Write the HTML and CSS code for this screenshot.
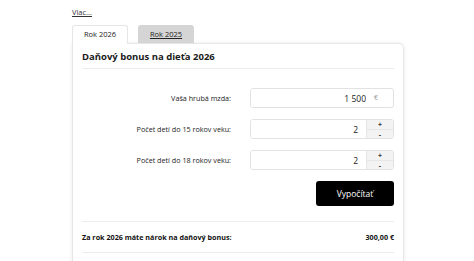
FILE: index.html
```html
<!DOCTYPE html>
<html lang="sk">
<head>
  <meta charset="UTF-8" />
  <title>Daňový bonus na dieťa</title>
  <link rel="stylesheet" href="styles.css">
</head>
<body>
  <div class="wrap">
    <a class="more" href="#">Viac...</a>

    <!-- záložky rokov -->
    <div class="tabs">
      <div class="tab active">Rok 2026</div>
      <a class="tab" href="#">Rok 2025</a>
    </div>

    <!-- kalkulačka -->
    <div class="card">
      <h2>Daňový bonus na dieťa 2026</h2>

      <div class="form">
        <div class="row">
          <label for="mzda">Vaša hrubá mzda:</label>
          <div class="field">
            <input type="text" id="mzda" value="1 500" />
            <span class="unit">€</span>
          </div>
        </div>
        <div class="row">
          <label for="deti15">Počet detí do 15 rokov veku:</label>
          <div class="field">
            <input type="text" id="deti15" value="2" />
            <div class="stepper"><span>+</span><span>-</span></div>
          </div>
        </div>
        <div class="row">
          <label for="deti18">Počet detí do 18 rokov veku:</label>
          <div class="field">
            <input type="text" id="deti18" value="2" />
            <div class="stepper"><span>+</span><span>-</span></div>
          </div>
        </div>
        <div class="actions">
          <button class="calc">Vypočítať</button>
        </div>
      </div>

      <div class="result">
        <span>Za rok 2026 máte nárok na daňový bonus:</span>
        <span>300,00 €</span>
      </div>
    </div>
  </div>
</body>
</html>
```

FILE: styles.css
```css
body {
  margin: 0;
  background-color: #fff;
  font-family: 'Open Sans', 'Noto Sans', sans-serif;
  color: #222;
  overflow: hidden;
}

.wrap {
  width: 332px;
  margin-left: 72px;
  padding-top: 6px;
}

.more {
  display: block;
  width: max-content;
  font-size: 7.5px;
  color: #333;
  line-height: 12px;
}

/* záložky */
.tabs {
  display: flex;
  gap: 10px;
  margin-top: 7px;
}

.tab {
  width: 56px;
  height: 18px;
  line-height: 18px;
  text-align: center;
  font-size: 7.5px;
  font-weight: 500;
  color: #222;
  border-radius: 3px 3px 0 0;
  background-color: #d5d5d5;
  box-sizing: border-box;
}

.tab.active {
  background-color: #fff;
  border: 1px solid #e6e6e6;
  border-bottom: none;
  line-height: 17px;
  position: relative;
  z-index: 2;
  margin-bottom: -1px;
  height: 19px;
}

/* karta */
.card {
  border: 1px solid #e6e6e6;
  border-radius: 0 5px 5px 5px;
  box-shadow: 0 0 4px rgba(0,0,0,0.08);
  padding: 0 9px;
  height: 240px;
  box-sizing: border-box;
}

.card h2 {
  margin: 0;
  padding-top: 4px;
  height: 20px;
  line-height: 17px;
  font-size: 9.5px;
  font-weight: 700;
  color: #1a1a1a;
  border-bottom: 1px solid #ececec;
}

.form {
  padding-top: 19px;
}

.row {
  display: flex;
  align-items: center;
  margin-bottom: 11px;
}

.row label {
  width: 149px;
  margin-right: 19px;
  text-align: right;
  font-size: 7.2px;
  font-weight: 500;
  color: #222;
}

.field {
  width: 144px;
  height: 20px;
  display: flex;
  border: 1px solid #e2e2e2;
  border-radius: 3px;
  box-sizing: border-box;
  overflow: hidden;
}

.field input {
  flex: 1;
  min-width: 0;
  border: none;
  outline: none;
  text-align: right;
  font-family: inherit;
  font-size: 8.5px;
  color: #222;
  padding: 0 8px;
}

.unit {
  width: 19px;
  font-size: 7px;
  color: #999;
  line-height: 18px;
}

.stepper {
  width: 26px;
  display: flex;
  flex-direction: column;
  border-left: 1px solid #e6e6e6;
  background-color: #f3f3f3;
}

.stepper span {
  flex: 1;
  text-align: center;
  font-size: 7px;
  font-weight: 700;
  line-height: 9px;
  color: #333;
}

.stepper span + span {
  border-top: 1px solid #e6e6e6;
}

.actions {
  display: flex;
  justify-content: flex-end;
}

.calc {
  width: 78px;
  height: 25px;
  background-color: #000;
  color: #fff;
  border: none;
  border-radius: 3px;
  font-family: inherit;
  font-size: 8.5px;
  font-weight: 500;
  cursor: pointer;
}

.result {
  margin-top: 15px;
  display: flex;
  justify-content: space-between;
  align-items: center;
  height: 30px;
  border-top: 1px solid #ececec;
  border-bottom: 1px solid #ececec;
  font-size: 7.2px;
  font-weight: 700;
  color: #111;
}
```
